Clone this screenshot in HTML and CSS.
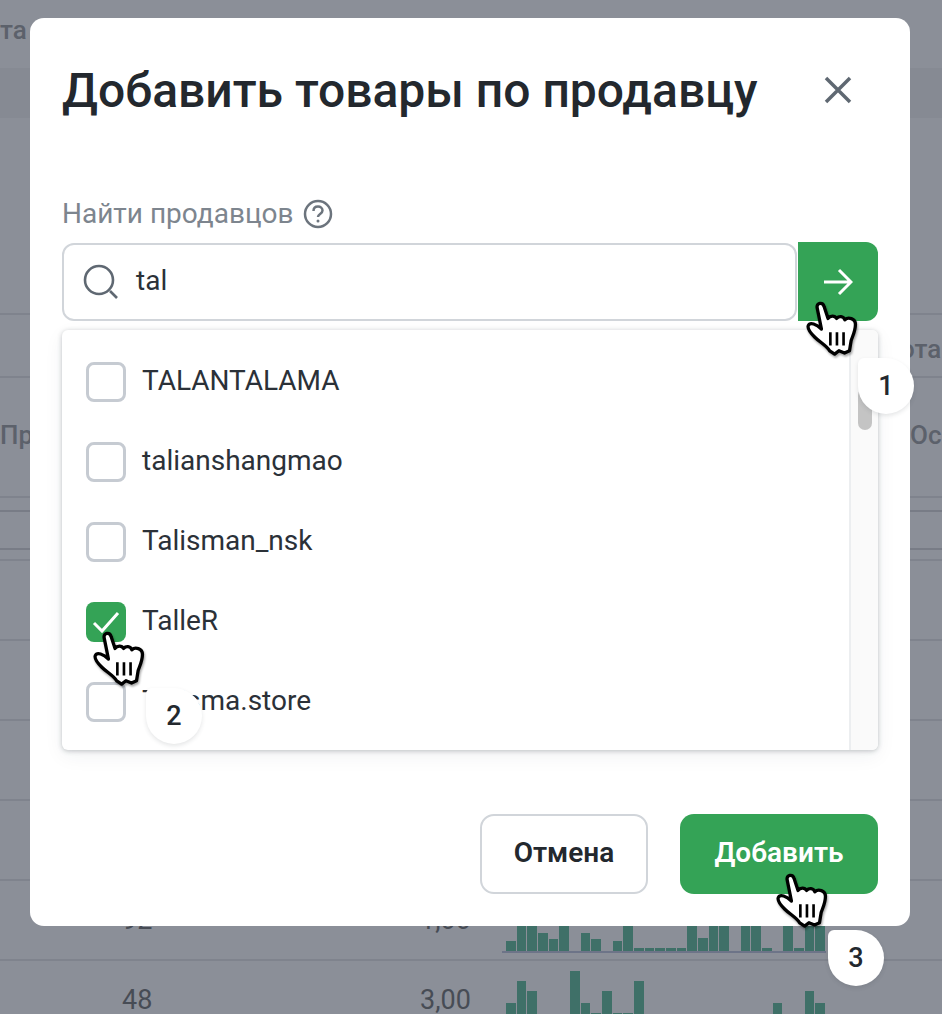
FILE: index.html
```html
<!DOCTYPE html>
<html lang="en">
<head>
    <meta charset="UTF-8">
    <title>Добавить товары по продавцу</title>
    <link rel="stylesheet" href="styles.css">
</head>
<body>
    <svg class="defs" width="0" height="0">
        <symbol id="hand" viewBox="0 0 200 200">
            <path d="M52 36C49 20 69 17 73 32L85 68C91 59 105 58 111 68C118 60 131 60 136 72C146 62 168 68 168 86C168 105 160 120 155 135L150 166L135 173L118 166L105 176L90 166C80 150 60 140 45 125C35 115 21 101 25 90C30 78 50 85 65 100Z" fill="#fff" stroke="#000" stroke-width="10" stroke-linejoin="round"/>
            <path d="M92 110v40M112 110v40M132 110v40" stroke="#000" stroke-width="8" fill="none"/>
        </symbol>
    </svg>

    <div class="page">
        <div class="row row-top"><span class="cell-text">та</span></div>
        <div class="row row-band"></div>
        <div class="row row-blank"></div>
        <div class="row row-sub"><span class="cell-text">ота</span></div>
        <div class="row row-head"><span class="cell-text">Пр</span><span class="cell-text">Ос</span></div>
        <div class="row row-thin-a"></div>
        <div class="row row-thin-b"></div>
        <div class="row row-thin-c"></div>
        <div class="row row-item"></div>
        <div class="row row-item"></div>
        <div class="row row-item"></div>
        <div class="row row-item"></div>
        <div class="row row-item row-data">
            <span class="num-a">92</span>
            <span class="num-b">1,00</span>
            <div class="chart chart-line">
                <i style="height:10px"></i><i style="height:26px"></i><i style="height:26px"></i><i style="height:18px"></i><i style="height:12px"></i><i style="height:26px"></i><i style="height:0"></i><i style="height:18px"></i><i style="height:12px"></i><i style="height:0"></i><i style="height:10px"></i><i style="height:26px"></i><i style="height:3px"></i><i style="height:3px"></i><i style="height:3px"></i><i style="height:3px"></i><i style="height:3px"></i><i style="height:26px"></i><i style="height:13px"></i><i style="height:26px"></i><i style="height:26px"></i><i style="height:0"></i><i style="height:26px"></i><i style="height:26px"></i><i style="height:3px"></i><i style="height:0"></i><i style="height:26px"></i><i style="height:3px"></i><i style="height:26px"></i><i style="height:26px"></i>
            </div>
        </div>
        <div class="row row-item row-data">
            <span class="num-a">48</span>
            <span class="num-b">3,00</span>
            <div class="chart">
                <i style="height:28px"></i><i style="height:50px"></i><i style="height:40px"></i><i style="height:0"></i><i style="height:0"></i><i style="height:0"></i><i style="height:60px"></i><i style="height:28px"></i><i style="height:18px"></i><i style="height:40px"></i><i style="height:18px"></i><i style="height:18px"></i><i style="height:50px"></i><i style="height:0"></i><i style="height:0"></i><i style="height:0"></i><i style="height:0"></i><i style="height:0"></i><i style="height:0"></i><i style="height:0"></i><i style="height:0"></i><i style="height:0"></i><i style="height:0"></i><i style="height:0"></i><i style="height:0"></i><i style="height:28px"></i><i style="height:0"></i><i style="height:0"></i><i style="height:40px"></i><i style="height:28px"></i>
            </div>
        </div>
    </div>

    <div class="modal">
        <div class="modal-header">
            <h1>Добавить товары по продавцу</h1>
            <svg class="close" viewBox="0 0 32 32"><path d="M4 4l24 24M28 4L4 28"/></svg>
        </div>

        <div class="field-label">
            <span>Найти продавцов</span>
            <svg class="help" viewBox="0 0 30 30">
                <circle cx="15" cy="15" r="13"/>
                <path d="M10.500 12c0-3 2-4.500 4.500-4.500s4.500 1.600 4.500 4c0 3.500-4.500 3.500-4.500 6.500"/>
                <circle class="dot" cx="15" cy="22" r="1.500"/>
            </svg>
        </div>

        <div class="search">
            <div class="search-input">
                <svg class="search-icon" viewBox="0 0 36 36"><circle cx="16" cy="16" r="14"/><path d="M27 27l7 7"/></svg>
                <span class="search-value">tal</span>
            </div>
            <div class="search-btn">
                <svg viewBox="0 0 30 30"><path d="M1 15h27M16 3l12 12-12 12"/></svg>
            </div>
        </div>

        <div class="dropdown">
            <div class="options">
                <div class="option"><span class="check"></span><span class="option-name">TALANTALAMA</span></div>
                <div class="option"><span class="check"></span><span class="option-name">talianshangmao</span></div>
                <div class="option"><span class="check"></span><span class="option-name">Talisman_nsk</span></div>
                <div class="option">
                    <span class="check checked"><svg viewBox="0 0 40 40"><path d="M8 21l8 8L32 11"/></svg></span><span class="option-name">TalleR</span>
                </div>
                <div class="option"><span class="check"></span><span class="option-name">Talisma.store</span></div>
            </div>
            <div class="scrollbar"><div class="thumb"></div></div>
        </div>

        <div class="modal-footer">
            <button class="btn btn-cancel">Отмена</button>
            <button class="btn btn-add">Добавить</button>
        </div>
    </div>

    <svg class="cursor cursor-1"><use href="#hand"/></svg>
    <svg class="cursor cursor-2"><use href="#hand"/></svg>
    <svg class="cursor cursor-3"><use href="#hand"/></svg>
    <div class="badge badge-1">1</div>
    <div class="badge badge-2">2</div>
    <div class="badge badge-3">3</div>
</body>
</html>
```

FILE: styles.css
```css
html, body {
    margin: 0;
    height: 100%;
    overflow: hidden;
}
body {
    font-family: Roboto, "Liberation Sans", sans-serif;
    background-color: #8b8f98;
    color: #23282e;
    position: relative;
}
.defs { position: absolute; }

/* dimmed page behind the modal */
.page { height: 1014px; overflow: hidden; }
.row {
    display: flex;
    justify-content: space-between;
    align-items: center;
    box-sizing: border-box;
    border-bottom: 2px solid #7f838d;
}
.cell-text {
    font-size: 26px;
    font-weight: 500;
    color: #5c616b;
    white-space: nowrap;
}
.row-top { height: 68px; border-bottom: none; padding-bottom: 8px; }
.row-band { height: 50px; background-color: #868a93; border-bottom: none; }
.row-blank { height: 197px; }
.row-sub { height: 63px; padding-left: 900px; justify-content: flex-start; padding-top: 6px; }
.row-head { height: 120px; padding-bottom: 4px; }
.row-head .cell-text:last-child { width: 32px; overflow: hidden; }
.row-thin-a { height: 14px; border-bottom-color: #787c86; }
.row-thin-b { height: 38px; border-bottom-color: #787c86; }
.row-thin-c { height: 11px; }
.row-item { height: 80px; }
.row-data { position: relative; display: block; }
.num-a, .num-b {
    position: absolute;
    top: 26px;
    font-size: 27px;
    line-height: 27px;
    color: #474c55;
}
.num-a { left: 122px; }
.num-b { left: 420px; }
.chart {
    position: absolute;
    left: 506px;
    top: 10px;
    width: 320px;
    height: 60px;
    display: flex;
    align-items: flex-end;
}
.chart-line::after {
    content: "";
    position: absolute;
    left: -4px;
    right: 0;
    bottom: -2px;
    height: 2px;
    background-color: #6d7488;
}
.chart i {
    display: block;
    flex: 1;
    margin-right: 1px;
    background-color: #3f7068;
}

/* modal */
.modal {
    position: absolute;
    left: 30px;
    top: 18px;
    width: 880px;
    height: 908px;
    box-sizing: border-box;
    padding: 0 32px;
    background-color: #fff;
    border-radius: 14px;
    display: flex;
    flex-direction: column;
}
.modal-header {
    display: flex;
    justify-content: space-between;
    align-items: center;
    height: 144px;
}
h1 {
    margin: 0;
    font-size: 48px;
    font-weight: 500;
    color: #23282e;
    white-space: nowrap;
}
.close {
    width: 32px;
    height: 32px;
    margin-right: 24px;
    fill: none;
    stroke: #5f6872;
    stroke-width: 3.500;
}
.field-label {
    display: flex;
    align-items: center;
    gap: 9px;
    height: 36px;
    margin-top: 33px;
    font-size: 28px;
    color: #7d858e;
}
.help {
    width: 30px;
    height: 30px;
    margin-top: 2px;
    fill: none;
    stroke: #6c747d;
    stroke-width: 2.500;
}
.help .dot { fill: #6c747d; stroke: none; }

.search {
    display: flex;
    gap: 1px;
    margin-top: 11px;
    height: 79px;
}
.search-input {
    flex: 1;
    display: flex;
    align-items: center;
    gap: 17px;
    box-sizing: border-box;
    margin-top: 1px;
    padding-left: 19px;
    border: 2px solid #d1d5da;
    border-radius: 12px;
    font-size: 28px;
    color: #2b3138;
}
.search-value { margin-bottom: 4px; }
.search-icon {
    width: 36px;
    height: 36px;
    fill: none;
    stroke: #5f6872;
    stroke-width: 2.600;
}
.search-btn {
    width: 80px;
    display: flex;
    align-items: center;
    justify-content: center;
    background-color: #34a356;
    border-radius: 0 12px 12px 0;
}
.search-btn svg {
    width: 30px;
    height: 30px;
    fill: none;
    stroke: #fff;
    stroke-width: 3;
}

.dropdown {
    display: flex;
    height: 420px;
    margin-top: 9px;
    border-radius: 6px;
    overflow: hidden;
    box-shadow: 0 1px 5px rgba(40, 50, 60, 0.28), 0 6px 20px rgba(40, 50, 60, 0.06);
}
.options {
    flex: 1;
    padding: 12px 24px 0;
}
.option {
    display: flex;
    align-items: center;
    gap: 16px;
    height: 80px;
    font-size: 28px;
    color: #2b3138;
}
.option-name { margin-bottom: 4px; }
.check {
    width: 40px;
    height: 40px;
    box-sizing: border-box;
    border: 3px solid #c6cbd2;
    border-radius: 8px;
    flex-shrink: 0;
}
.check.checked {
    border: none;
    background-color: #34a356;
}
.check svg {
    display: block;
    fill: none;
    stroke: #fff;
    stroke-width: 3;
}
.scrollbar {
    width: 29px;
    box-sizing: border-box;
    padding: 58px 6px 0 7px;
    border-left: 2px solid #eceef0;
    background-color: #fafafa;
}
.thumb {
    height: 42px;
    border-radius: 8px;
    background-color: #c4c4c4;
}

.modal-footer {
    display: flex;
    justify-content: flex-end;
    gap: 32px;
    margin-top: 64px;
}
.btn {
    height: 80px;
    border-radius: 14px;
    font-family: inherit;
    font-size: 28px;
    font-weight: 600;
    padding: 0 0 3px;
}
.btn-cancel {
    width: 168px;
    background-color: #fff;
    border: 2px solid #d1d5da;
    color: #23282e;
}
.btn-add {
    width: 198px;
    background-color: #34a356;
    border: none;
    color: #fff;
}

/* tutorial markers on top of everything */
.cursor {
    position: absolute;
    width: 66px;
    height: 66px;
    filter: drop-shadow(1px 2px 1px rgba(0, 0, 0, 0.35));
}
.cursor-1 { left: 800px; top: 296px; }
.cursor-2 { left: 87px; top: 626px; }
.cursor-3 { left: 770px; top: 868px; }
.badge {
    position: absolute;
    width: 56px;
    height: 56px;
    display: flex;
    align-items: center;
    justify-content: center;
    background-color: #fff;
    border-radius: 6px 50% 50% 50%;
    font-size: 27px;
    font-weight: 500;
    color: #23282e;
    box-shadow: 0 2px 4px rgba(40, 50, 60, 0.12);
}
.badge-1 { left: 858px; top: 358px; }
.badge-2 { left: 146px; top: 688px; }
.badge-3 { left: 828px; top: 930px; }
```
